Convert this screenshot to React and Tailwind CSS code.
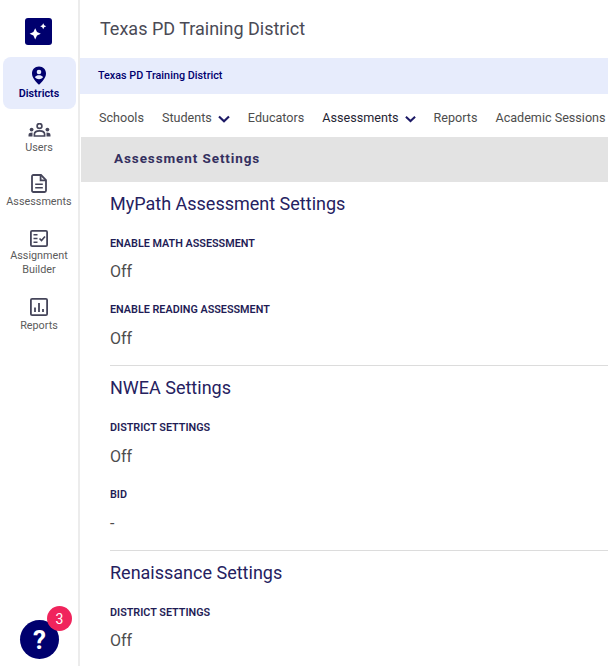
const Nav = ({ children, chevron, dark, chevronClass = "w-[11px]" }) => (
  <div className={`flex items-center gap-[6px] text-[12.6px] leading-[20px] whitespace-nowrap ${dark ? "text-[#1f2433]" : "text-[#4d4d4d]"}`}>
    <span>{children}</span>
    {chevron && (
      <svg height="8" viewBox="0 0 12 8" fill="none" className={`mt-[3px] ${chevronClass}`}>
        <path d="M1 1.5 6 6.2 11 1.5" stroke="#1d1a66" strokeWidth="2.2" />
      </svg>
    )}
  </div>
);

const SideItem = ({ icon, label, active, labelGap = "mt-[1px]" }) => (
  <div className={`flex flex-col items-center w-[73px] ${active ? "bg-[#e7ecfc] rounded-[8px] h-[52px] pt-[9px] text-[#00006e] font-semibold" : "text-[#5b5b5b]"}`}>
    <div className="h-[20px] flex items-center justify-center">{icon}</div>
    <div className={`text-[10.8px] leading-[14px] text-center ${labelGap}`}>{label}</div>
  </div>
);

const Field = ({ label, value, gapTop, gapValue }) => (
  <div className={gapTop}>
    <div className="text-[10.8px] leading-[14px] font-semibold text-[#1f1d56] uppercase">{label}</div>
    <div className={`${gapValue} text-[16px] leading-[22px] text-[#4d4d4d]`}>{value}</div>
  </div>
);

const Section = ({ title, children, mt }) => (
  <div className={mt}>
    <div className="text-[18px] leading-[24px] text-[#25215f]">{title}</div>
    {children}
  </div>
);

export default function App() {
  return (
    <div className="h-[666px] w-[608px] overflow-hidden flex bg-white font-['Roboto',sans-serif]">
      <aside className="w-[80px] shrink-0 h-full border-r-2 border-[#ececec] flex flex-col items-center relative">
        <div className="mt-[18px] -ml-[2px] w-[27px] h-[27px] rounded-[3px] bg-[#00006e] flex items-center justify-center">
          <svg width="21" height="21" viewBox="0 0 21 21" fill="white">
            <path d="M7.2 7.2 9 11 12.8 12.8 9 14.6 7.2 18.4 5.4 14.6 1.6 12.8 5.4 11Z" />
            <path d="M15.2 2.2 16.2 4.2 18.2 5.2 16.2 6.2 15.2 8.2 14.2 6.2 12.2 5.2 14.2 4.2Z" />
          </svg>
        </div>
        <div className="mt-[12px] flex flex-col items-center">
          <SideItem
            active
            label="Districts"
            icon={
              <svg width="16" height="20" viewBox="0 0 16 20">
                <path d="M8 0.6C3.8 0.6 1 3.6 1 7.4 1 11.8 5.2 16 8 18.8 10.8 16 15 11.8 15 7.4 15 3.6 12.2 0.6 8 0.6Z" fill="#00006e" />
                <circle cx="8" cy="6" r="2.3" fill="#e7ecfc" />
                <path d="M3.9 11.3C4.8 9.6 6.3 9.2 8 9.2 9.7 9.2 11.2 9.6 12.1 11.3 11 12.6 9.6 13.2 8 13.2 6.4 13.2 5 12.6 3.9 11.3Z" fill="#e7ecfc" />
              </svg>
            }
          />
          <div className="mt-[11px]">
            <SideItem
              label="Users"
              icon={
                <svg width="23" height="14" viewBox="0 0 23 14" fill="#45455a">
                  <circle cx="11.5" cy="3" r="2.4" fill="none" stroke="#45455a" strokeWidth="1.7" />
                  <path d="M6.4 13V11.2C6.4 9 8.6 7.8 11.5 7.8S16.6 9 16.6 11.2V13Z" fill="none" stroke="#45455a" strokeWidth="1.7" />
                  <circle cx="3.6" cy="6.6" r="1.9" />
                  <circle cx="19.4" cy="6.6" r="1.9" />
                  <path d="M0.5 13.5V12C0.5 10.4 2 9.6 4.5 9.6V13.5Z" />
                  <path d="M22.5 13.5V12C22.5 10.4 21 9.6 18.5 9.6V13.5Z" />
                </svg>
              }
            />
          </div>
          <div className="mt-[19px]">
            <SideItem
              label="Assessments"
              icon={
                <svg width="16" height="19" viewBox="0 0 16 19" fill="none" stroke="#45455a" strokeWidth="1.8" className="-mt-[2px]">
                  <path d="M1 2.4C1 1.6 1.6 1 2.4 1H10L15 6V16.6C15 17.4 14.4 18 13.6 18H2.4C1.6 18 1 17.4 1 16.6Z" />
                  <path d="M9.6 1V6.4H15" />
                  <path d="M4.2 10.2H11.8M4.2 13.8H11.8" strokeWidth="1.5" />
                </svg>
              }
            />
          </div>
          <div className="mt-[19px]">
            <SideItem
              label={<>Assignment<br />Builder</>}
              icon={
                <svg width="18" height="17" viewBox="0 0 18 17" fill="none" stroke="#45455a" strokeWidth="1.8">
                  <rect x="0.9" y="0.9" width="16.2" height="15.2" rx="1.2" />
                  <path d="M3.5 4.8H7.5M3.5 8.5H7.5M3.5 12.2H7.5" strokeWidth="1.5" />
                  <path d="M9.5 8.5 11.5 10.5 15 6.5" strokeWidth="1.7" />
                </svg>
              }
            />
          </div>
          <div className="mt-[20px]">
            <SideItem
              label="Reports"
              labelGap="mt-[2px]"
              icon={
                <svg width="18" height="18" viewBox="0 0 18 18" fill="none" stroke="#45455a" strokeWidth="1.8">
                  <rect x="0.9" y="0.9" width="16.2" height="16.2" rx="1.2" />
                  <path d="M5 9.5V14M9 5V14M13 11V14" strokeWidth="1.8" />
                </svg>
              }
            />
          </div>
        </div>
        <div className="absolute left-[20px] top-[620px] w-[39px] h-[39px] rounded-full bg-[#00006e] flex items-center justify-center text-white text-[26px] font-bold leading-none">?</div>
        <div className="absolute left-[47px] top-[606px] w-[25px] h-[25px] rounded-full bg-[#f0245c] flex items-center justify-center text-white text-[14px] leading-none">3</div>
      </aside>
      <main className="flex-1 min-w-0">
        <div className="h-[58px] flex items-center pl-[20px] pb-[2px] text-[18px] text-[#4a4a55] whitespace-nowrap">Texas PD Training District</div>
        <div className="h-[36px] -ml-[1px] bg-[#e7ecfc] flex items-center pl-[19px] text-[10.8px] font-medium text-[#00006e]">Texas PD Training District</div>
        <div className="h-[43px] pl-[19px] flex items-center gap-[18px] pt-[4px] whitespace-nowrap">
          <Nav>Schools</Nav>
          <Nav chevron chevronClass="w-[12px]">Students</Nav>
          <Nav>Educators</Nav>
          <Nav chevron dark>Assessments</Nav>
          <Nav>Reports</Nav>
          <Nav>Academic Sessions</Nav>
        </div>
        <div className="h-[45px] ml-[1px] bg-[#e3e3e3] flex items-center pl-[33px] pb-[2px] text-[13.5px] font-bold tracking-[0.9px] text-[#34305f]">Assessment Settings</div>
        <div className="pl-[30px] pt-[10px]">
          <Section title="MyPath Assessment Settings">
            <Field gapTop="mt-[21px]" gapValue="mt-[10px]" label="Enable Math Assessment" value="Off" />
            <Field gapTop="mt-[20px]" gapValue="mt-[11px]" label="Enable Reading Assessment" value="Off" />
          </Section>
          <div className="border-t border-[#dcdcdc] mt-[15px]" />
          <Section mt="mt-[10px]" title="NWEA Settings">
            <Field gapTop="mt-[21px]" gapValue="mt-[11px]" label="District Settings" value="Off" />
            <Field gapTop="mt-[20px]" gapValue="mt-[11px]" label="BID" value="-" />
          </Section>
          <div className="border-t border-[#dcdcdc] mt-[15px]" />
          <Section mt="mt-[10px]" title="Renaissance Settings">
            <Field gapTop="mt-[21px]" gapValue="mt-[10px]" label="District Settings" value="Off" />
          </Section>
        </div>
      </main>
    </div>
  );
}
